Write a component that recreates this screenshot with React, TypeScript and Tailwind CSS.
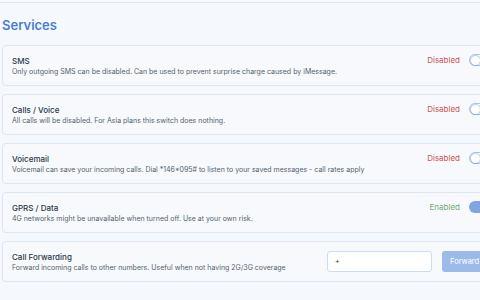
import React from "react";

type Row = { title: string; desc: string; status: "Disabled" | "Enabled" };

const rows: Row[] = [
  { title: "SMS", desc: "Only outgoing SMS can be disabled. Can be used to prevent surprise charge caused by iMessage.", status: "Disabled" },
  { title: "Calls / Voice", desc: "All calls will be disabled. For Asia plans this switch does nothing.", status: "Disabled" },
  { title: "Voicemail", desc: "Voicemail can save your incoming calls. Dial *146*095# to listen to your saved messages - call rates apply", status: "Disabled" },
  { title: "GPRS / Data", desc: "4G networks might be unavailable when turned off. Use at your own risk.", status: "Enabled" },
];

function Toggle({ on }: { on: boolean }) {
  return on ? (
    <div className="w-[24px] h-[12px] rounded-full bg-[#7fa5e3] flex items-center justify-end px-[1px] shrink-0">
      <div className="w-[10px] h-[10px] rounded-full bg-white" />
    </div>
  ) : (
    <div className="w-[24px] h-[12px] rounded-full bg-white border border-[#a9c3ee] flex items-center px-[1px] shrink-0">
      <div className="w-[9px] h-[9px] rounded-full bg-white shadow-[0_0_1px_1px_rgba(120,150,200,0.5)]" />
    </div>
  );
}

export default function App() {
  return (
    <div className="w-[480px] h-[300px] overflow-hidden bg-[#f5f8fd] text-[#2f3a4a]" style={{ fontFamily: "Inter, 'Noto Sans', sans-serif" }}>
      <div className="h-[3px] border-b border-[#dfe7f2] bg-[#f5f8fd]" />
      <div className="w-[502px] pl-[2px]">
        <h1 className="text-[13px] font-semibold text-[#4a7ed6] mt-[14px] mb-[12px] leading-[16px]">Services</h1>
        <div className="flex flex-col gap-[8px]">
          {rows.map((r) => (
            <div key={r.title} className="h-[41px] rounded-[4px] border border-[#dde6f1] bg-[#f7f9fd] flex items-center pl-[9px] pr-[8px]">
              <div className="flex-1 flex flex-col">
                <div className="text-[8px] leading-[12px] text-[#2c3848] font-medium">{r.title}</div>
                <div className="text-[7px] leading-[10px] text-[#555f6e]">{r.desc}</div>
              </div>
              <div className="flex items-center gap-[9px] self-start mt-[8px]">
                <span className={"text-[8px] " + (r.status === "Enabled" ? "text-[#6fae6f]" : "text-[#c9574c]")}>{r.status}</span>
                <Toggle on={r.status === "Enabled"} />
              </div>
            </div>
          ))}
          <div className="h-[41px] rounded-[4px] border border-[#dde6f1] bg-[#f7f9fd] flex items-center pl-[9px]">
            <div className="flex-1 flex flex-col">
              <div className="text-[8px] leading-[12px] text-[#2c3848] font-medium">Call Forwarding</div>
              <div className="text-[7px] leading-[10px] text-[#555f6e]">Forward incoming calls to other numbers. Useful when not having 2G/3G coverage</div>
            </div>
            <div className="w-[105px] h-[21px] rounded-[3px] border border-[#cddcf2] bg-white flex items-center px-[7px] text-[7px] text-[#333]">+</div>
            <div className="ml-[10px] w-[50px] h-[21px] rounded-[3px] bg-[#9dbbe9] text-white text-[7.5px] flex items-center pl-[8px] mr-[9px]">Forward</div>
          </div>
        </div>
      </div>
    </div>
  );
}
